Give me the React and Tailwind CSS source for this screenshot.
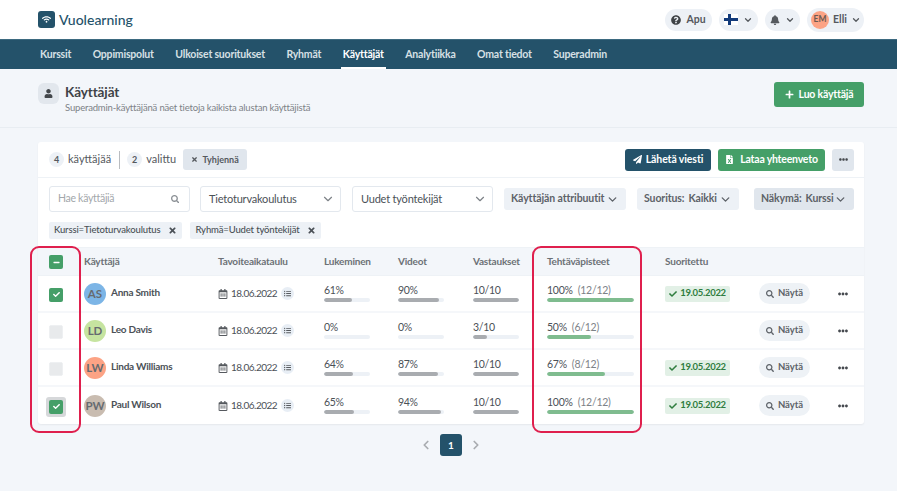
import React from "react";
import { FaQuestionCircle, FaBell, FaUser, FaPlus, FaTimes, FaSearch, FaPaperPlane, FaFileExcel, FaEllipsisH, FaCheck, FaMinus, FaRegCalendarAlt, FaListUl, FaWifi } from "react-icons/fa";
import { LuChevronDown, LuChevronLeft, LuChevronRight } from "react-icons/lu";

const nav = ["Kurssit", "Oppimispolut", "Ulkoiset suoritukset", "Ryhmät", "Käyttäjät", "Analytiikka", "Omat tiedot", "Superadmin"];

const rows = [
  { i: "AS", n: "Anna Smith", c: "bg-[#7cb5e6]", check: "on", r: 61, v: 90, a: "10/10", aw: 100, t: 100, ts: "(12/12)", done: true },
  { i: "LD", n: "Leo Davis", c: "bg-[#c6e4a0]", check: "off", r: 0, v: 0, a: "3/10", aw: 30, t: 50, ts: "(6/12)", done: false },
  { i: "LW", n: "Linda Williams", c: "bg-[#fca385]", check: "off", r: 64, v: 87, a: "10/10", aw: 100, t: 67, ts: "(8/12)", done: true },
  { i: "PW", n: "Paul Wilson", c: "bg-[#c9bcb0]", check: "focus", r: 65, v: 94, a: "10/10", aw: 100, t: 100, ts: "(12/12)", done: true },
];

const GRID = "grid grid-cols-[46px_134px_106px_74px_75px_74px_118px_94px_72px_1fr] items-center";

function Bar({ w, width = "w-[46px]", color = "bg-[#a9acb0]" }) {
  return (
    <div className={`${width} h-[4px] rounded-full bg-[#edf1f6] overflow-hidden`}>
      <div className={`h-full rounded-full ${color}`} style={{ width: `${w}%` }} />
    </div>
  );
}

function Stat({ label, w }) {
  return (
    <div className="flex flex-col gap-[1px] -mt-[2px]">
      <div className="text-[10.5px] leading-[14px] tracking-[-0.3px] text-[#4b5157]">{label}</div>
      <Bar w={w} />
    </div>
  );
}

function Check({ state }) {
  if (state === "off") return <div className="w-[14px] h-[14px] rounded-[2px] bg-[#e8eaec] border border-[#eef0f2]" />;
  const box = (
    <div className="w-[14px] h-[14px] rounded-[2px] bg-[#459f68] flex items-center justify-center text-white">
      <FaCheck className="text-[7px]" />
    </div>
  );
  if (state === "focus") return <div className="w-[20px] h-[20px] rounded-[3px] bg-[#d6d8da] flex items-center justify-center">{box}</div>;
  return box;
}

function Pill({ children, className = "" }) {
  return <div className={`h-[22px] rounded-full bg-[#edf1f6] flex items-center justify-center text-[#55595e] ${className}`}>{children}</div>;
}

function Filter({ label, value, className = "" }) {
  return (
    <div className={`h-[22px] rounded-[3px] flex items-center justify-between whitespace-nowrap text-[#5d6268] text-[10.5px] font-bold tracking-[-0.1px] ${className}`}>
      <span>{label}{value && <span className="ml-[4px]">{value}</span>}</span>
      <LuChevronDown className="text-[13px] shrink-0" strokeWidth={2.5} />
    </div>
  );
}

function Select({ label, className = "" }) {
  return (
    <div className={`h-[26px] rounded-[3px] border border-[#e3e8ee] bg-white flex items-center justify-between whitespace-nowrap pl-[8px] pr-[5px] text-[11px] tracking-[-0.2px] text-[#4b5157] ${className}`}>
      <span>{label}</span>
      <LuChevronDown className="text-[14px] text-[#7d8287]" />
    </div>
  );
}

function Tag({ label }) {
  return (
    <div className="h-[17px] rounded-[2px] bg-[#edf1f6] flex items-center gap-[8px] px-[5px] whitespace-nowrap text-[9.5px] tracking-[-0.15px] font-medium text-[#4b5157]">
      <span>{label}</span>
      <FaTimes className="text-[9px] text-[#4b5157]" />
    </div>
  );
}

export default function App() {
  return (
    <div className="relative w-[897px] h-[491px] overflow-hidden bg-[#f3f6fa] font-['Lato',sans-serif] text-[#45494e]">
      {/* top bar */}
      <header className="h-[39px] bg-white flex items-center justify-between pl-[38px] pr-[33px]">
        <div className="flex items-center gap-[4px]">
          <div className="w-[17px] h-[17px] rounded-[3px] bg-[#24526a] flex items-center justify-center text-white">
            <FaWifi className="text-[9px]" />
          </div>
          <span className="text-[14px] font-medium tracking-[0px] text-[#24526a]">Vuolearning</span>
        </div>
        <div className="flex items-center gap-[7px]">
          <Pill className="w-[47px] gap-[5px] text-[10.5px] font-bold">
            <FaQuestionCircle className="text-[10px] text-[#3f4347]" />
            <span>Apu</span>
          </Pill>
          <Pill className="w-[39px] gap-[5px]">
            <svg width="14" height="11" viewBox="0 0 14 11"><rect width="14" height="11" fill="#fff" /><rect x="4" width="3" height="11" fill="#123a7a" /><rect y="4" width="14" height="3" fill="#123a7a" /></svg>
            <LuChevronDown className="text-[10px]" strokeWidth={3} />
          </Pill>
          <Pill className="w-[35px] gap-[5px]">
            <FaBell className="text-[10px] text-[#55595e]" />
            <LuChevronDown className="text-[10px]" strokeWidth={3} />
          </Pill>
          <Pill className="w-[57px] h-[24px] justify-start pl-[4px] gap-[4px] text-[10.5px] font-bold">
            <span className="w-[18px] h-[18px] rounded-full bg-[#fca385] flex items-center justify-center text-[8.5px] font-bold text-[#6b5a52]">EM</span>
            <span>Elli</span>
            <LuChevronDown className="text-[10px]" strokeWidth={3} />
          </Pill>
        </div>
      </header>

      {/* nav */}
      <nav className="h-[30px] bg-[#24526a] border-t border-[#3d6a80] flex items-stretch pl-[40px] gap-[21.5px] whitespace-nowrap text-[10.5px] font-bold tracking-[-0.2px] text-[#d7e0e5]">
        {nav.map((n) => (
          <div key={n} className={`relative flex items-center ${n === "Käyttäjät" ? "text-white" : ""}`}>
            {n}
            {n === "Käyttäjät" && <span className="absolute -left-[2px] -right-[2px] bottom-0 h-[2px] bg-white" />}
          </div>
        ))}
      </nav>

      {/* page header */}
      <section className="h-[59px] border-b border-[#e8edf2] flex items-start justify-between pt-[14px] pl-[38px] pr-[33px]">
        <div className="flex items-start gap-[6px]">
          <div className="w-[21px] h-[21px] rounded-[6px] bg-[#e2e7ed] flex items-center justify-center text-[#43474b]">
            <FaUser className="text-[9px]" />
          </div>
          <div className="flex flex-col pt-[1px]">
            <span className="text-[13.5px] leading-[17px] tracking-[-0.1px] font-bold text-[#3f4347]">Käyttäjät</span>
            <span className="text-[9.5px] leading-[14px] tracking-[-0.18px] text-[#7d8287]">Superadmin-käyttäjänä näet tietoja kaikista alustan käyttäjistä</span>
          </div>
        </div>
        <div className="w-[90px] h-[25px] -mt-[1px] rounded-[3px] bg-[#459f68] flex items-center justify-center gap-[5px] text-white text-[10.5px] tracking-[-0.2px] font-bold">
          <FaPlus className="text-[9px]" />
          <span>Luo käyttäjä</span>
        </div>
      </section>

      {/* card */}
      <main className="mx-[38px] mt-[14px] w-[826px] h-[282px] bg-white rounded-[3px] shadow-[0_1px_2px_rgba(0,0,0,0.06)]">
        <div className="h-[36px] border-b border-[#eef2f6] flex items-center pl-[11px] pr-[10px]">
          <span className="w-[15px] h-[15px] rounded-full bg-[#edf1f6] flex items-center justify-center text-[9px] font-bold text-[#55595e]">4</span>
          <span className="ml-[4px] text-[11px] text-[#55595e]">käyttäjää</span>
          <span className="ml-[8px] mr-[7px] w-px h-[18px] bg-[#b9bcc0]" />
          <span className="w-[15px] h-[15px] rounded-full bg-[#edf1f6] flex items-center justify-center text-[9px] font-bold text-[#55595e]">2</span>
          <span className="ml-[4px] text-[11px] text-[#55595e]">valittu</span>
          <div className="ml-[7px] w-[64px] h-[21px] rounded-[3px] bg-[#e0e6ed] flex items-center justify-center gap-[4px] text-[9px] font-bold text-[#55595e]">
            <FaTimes className="text-[7px]" />
            <span>Tyhjennä</span>
          </div>
          <div className="ml-auto flex items-center gap-[7px]">
            <div className="w-[86px] h-[22px] rounded-[3px] bg-[#24526a] flex items-center justify-center gap-[4px] text-white text-[10.5px] tracking-[-0.1px] font-bold">
              <FaPaperPlane className="text-[9px]" />
              <span>Lähetä viesti</span>
            </div>
            <div className="w-[107px] h-[22px] rounded-[3px] bg-[#459f68] flex items-center justify-center gap-[6px] text-white text-[10.5px] tracking-[-0.2px] font-bold">
              <FaFileExcel className="text-[9px]" />
              <span>Lataa yhteenveto</span>
            </div>
            <div className="w-[22px] h-[22px] rounded-[3px] bg-[#e0e6ed] flex items-center justify-center text-[#45494e]">
              <FaEllipsisH className="text-[9px]" />
            </div>
          </div>
        </div>

        <div className="h-[69px] pl-[11px] pr-[11px] pt-[8px] bg-white">
          <div className="flex items-center">
            <div className="w-[141px] h-[26px] shrink-0 rounded-[3px] border border-[#e3e8ee] flex items-center justify-between pl-[8px] pr-[10px] text-[10.5px] tracking-[-0.3px] text-[#a3a7ab]">
              <span>Hae käyttäjiä</span>
              <FaSearch className="text-[8.5px] text-[#8b9095]" />
            </div>
            <Select label="Tietoturvakoulutus" className="ml-[10px] w-[141px] shrink-0" />
            <Select label="Uudet työntekijät" className="ml-[11px] w-[141px] shrink-0" />
            <Filter label="Käyttäjän attribuutit" className="ml-[11px] w-[122px] shrink-0 px-[7px] bg-[#edf1f6]" />
            <Filter label="Suoritus:" value="Kaikki" className="ml-[11px] w-[102px] shrink-0 px-[7px] bg-[#edf1f6]" />
            <Filter label="Näkymä:" value="Kurssi" className="ml-[15px] w-[100px] shrink-0 px-[7px] bg-[#e0e6ed]" />
          </div>
          <div className="flex items-center gap-[8px] mt-[10px]">
            <Tag label="Kurssi=Tietoturvakoulutus" />
            <Tag label="Ryhmä=Uudet työntekijät" />
          </div>
        </div>

        {/* table */}
        <div className={`${GRID} h-[29px] bg-[#f3f6fa] border-y border-[#eef2f6] text-[10px] font-bold tracking-[-0.2px] text-[#6c7176]`}>
          <div className="flex justify-center pr-[10px] pt-[1px]">
            <div className="w-[14px] h-[14px] rounded-[2px] bg-[#459f68] flex items-center justify-center text-white">
              <FaMinus className="text-[7px]" />
            </div>
          </div>
          <div>Käyttäjä</div>
          <div>Tavoiteaikataulu</div>
          <div>Lukeminen</div>
          <div>Videot</div>
          <div>Vastaukset</div>
          <div>Tehtäväpisteet</div>
          <div>Suoritettu</div>
          <div />
          <div />
        </div>
        {rows.map((r, idx) => (
          <div key={r.n} className={`${GRID} h-[37px] ${idx < 3 ? "border-b-2 border-[#f5f7fa]" : ""}`}>
            <div className="flex justify-center pr-[10px] pt-[2px]"><Check state={r.check} /></div>
            <div className="flex items-center gap-[5px]">
              <span className={`w-[22px] h-[22px] rounded-full ${r.c} flex items-center justify-center text-[11.5px] font-bold text-[#666b70]`}>{r.i}</span>
              <span className="text-[10px] tracking-[-0.25px] font-bold text-[#4b5157] -mt-[2px]">{r.n}</span>
            </div>
            <div className="flex items-center gap-[3px] text-[10px] tracking-[-0.5px] text-[#4b5157]">
              <FaRegCalendarAlt className="text-[10px] text-[#55595e]" />
              <span>18.06.2022</span>
              <span className="ml-[1px] w-[13px] h-[13px] rounded-full bg-[#e8eef5] flex items-center justify-center">
                <FaListUl className="text-[7px] text-[#55595e]" />
              </span>
            </div>
            <Stat label={`${r.r}%`} w={r.r} />
            <Stat label={`${r.v}%`} w={r.v} />
            <Stat label={r.a} w={r.aw} />
            <div className="flex flex-col gap-[1px] -mt-[2px]">
              <div className="text-[10.5px] leading-[14px] tracking-[-0.25px] text-[#4b5157]">
                {r.t}%<span className="ml-[5px] text-[#7d8287]">{r.ts}</span>
              </div>
              <Bar w={r.t} width="w-[87px]" color="bg-[#7fbc8f]" />
            </div>
            <div>
              {r.done && (
                <div className="w-[65px] h-[16px] rounded-[2px] bg-[#e2f0e6] flex items-center justify-center gap-[3px] text-[9.5px] tracking-[-0.3px] font-bold text-[#2f7d3f]">
                  <FaCheck className="text-[8px]" />
                  <span>19.05.2022</span>
                </div>
              )}
            </div>
            <div className="w-[51px] h-[21px] rounded-full bg-[#eef2f6] flex items-center justify-center gap-[4px] text-[9.5px] font-bold text-[#5d6268]">
              <FaSearch className="text-[8px]" />
              <span>Näytä</span>
            </div>
            <div className="flex justify-start pl-[7px] text-[#45494e]">
              <FaEllipsisH className="text-[10px]" />
            </div>
          </div>
        ))}
      </main>

      {/* pagination */}
      <div className="mt-[10px] flex items-center justify-center gap-[7px] pl-[5px]">
        <LuChevronLeft className="text-[14px] text-[#a9acb0]" strokeWidth={3} />
        <div className="w-[22px] h-[22px] rounded-[3px] bg-[#24526a] flex items-center justify-center text-[10px] font-bold text-white">1</div>
        <LuChevronRight className="text-[14px] text-[#a9acb0]" strokeWidth={3} />
      </div>

      {/* highlight outlines */}
      <div className="absolute left-[30px] top-[246px] w-[51px] h-[187px] rounded-[9px] border-[2.5px] border-[#df1f4d] pointer-events-none" />
      <div className="absolute left-[532px] top-[246px] w-[110px] h-[187px] rounded-[9px] border-[2.5px] border-[#df1f4d] pointer-events-none" />
    </div>
  );
}
